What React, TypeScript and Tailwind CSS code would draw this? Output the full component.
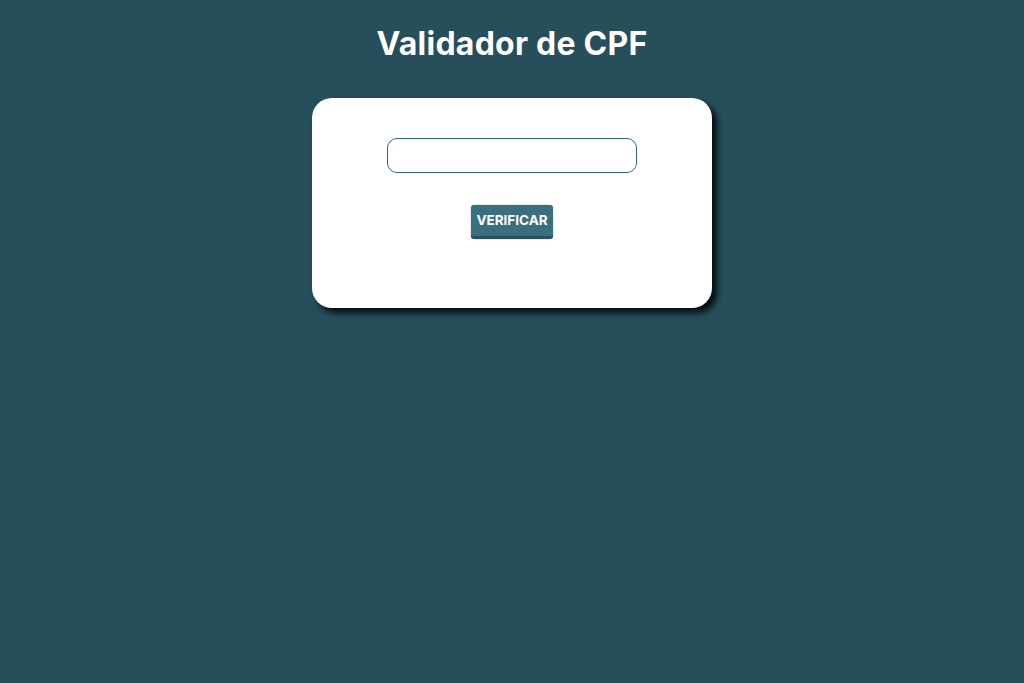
import React from 'react';

export default function App() {
  return (
    <div className="min-h-[683px] bg-[#264e5b] flex flex-col items-center" style={{ fontFamily: 'Inter, "Open Sans", sans-serif' }}>
      <h1 className="mt-[21px] text-[32px] leading-[46px] font-bold text-white tracking-[0.25px]">
        Validador de CPF
      </h1>

      <div className="mt-[31px] w-[400px] h-[210px] bg-white rounded-[20px] shadow-[5px_5px_6px_rgba(0,0,0,0.85)] flex flex-col items-center pt-[40px]">
        <input
          type="text"
          className="w-[250px] h-[35px] border border-[#2f6a7c] rounded-[10px] outline-none px-3"
        />
        <button className="mt-[32px] h-[34px] px-[5px] bg-[#3a6f7f] border-b-[3px] border-[#27505d] rounded-[3px] text-white font-bold text-[13.5px] shadow-[0_0_2px_rgba(0,0,0,0.3)]">
          VERIFICAR
        </button>
      </div>
    </div>
  );
}
